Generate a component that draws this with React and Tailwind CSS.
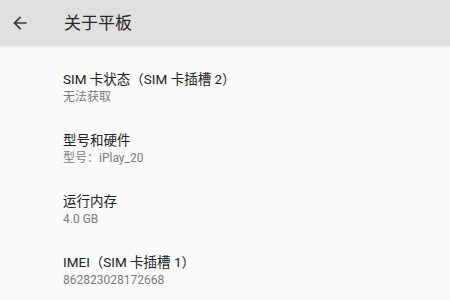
import React from "react";

const rows = [
  { title: "SIM 卡状态（SIM 卡插槽 2）", sub: "无法获取" },
  { title: "型号和硬件", sub: "型号：iPlay_20" },
  { title: "运行内存", sub: "4.0 GB" },
  { title: "IMEI（SIM 卡插槽 1）", sub: "862823028172668" },
];

export default function App() {
  return (
    <div
      className="w-[450px] h-[300px] overflow-hidden bg-[#fafafa] flex flex-col"
      style={{ fontFamily: '"Roboto", "Noto Sans CJK SC", sans-serif' }}
    >
      <div className="h-[46px] shrink-0 bg-[#e0e0e0] flex items-center shadow-[0_1px_2px_rgba(0,0,0,0.08)]">
        <div className="w-[64px] pl-[10px] flex items-center">
          <svg width="20" height="20" viewBox="0 0 24 24" fill="#3a3a3a">
            <path d="M20 11H7.83l5.59-5.59L12 4l-8 8 8 8 1.41-1.41L7.83 13H20v-2z" />
          </svg>
        </div>
        <div className="text-[17px] text-[#262626] leading-none">关于平板</div>
      </div>
      <div className="flex flex-col pl-[63px] pt-[23px]">
        {rows.map((r) => (
          <div key={r.title} className="h-[61px] flex flex-col">
            <div className="text-[13.5px] leading-[20px] text-[#222222]">{r.title}</div>
            <div className="text-[12px] leading-[16px] text-[#7a7a7a]">{r.sub}</div>
          </div>
        ))}
      </div>
    </div>
  );
}
